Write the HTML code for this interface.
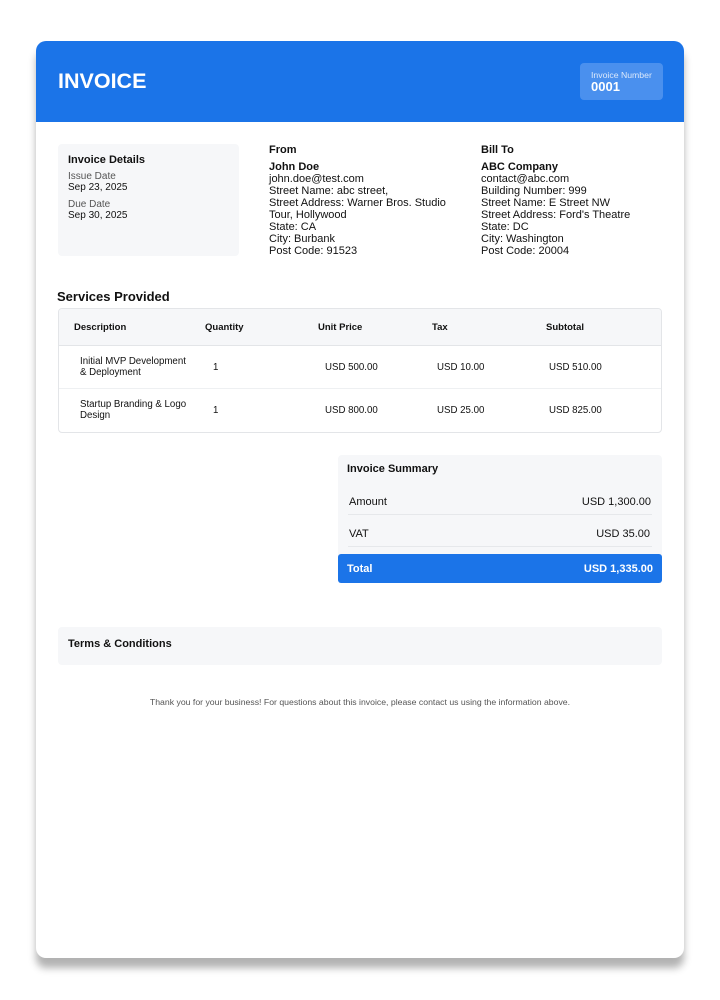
<!DOCTYPE html>
<html><head><meta charset="utf-8"><style>
*{margin:0;padding:0;box-sizing:border-box}
body{width:720px;height:1000px;background:#fff;font-family:"Liberation Sans",Arial,sans-serif;color:#111;position:relative;overflow:hidden}
.card{position:absolute;left:36px;top:41px;width:648px;height:917px;background:#fff;border-radius:10px;box-shadow:0 10px 8px rgba(0,0,0,0.3);overflow:hidden}
.hdr{position:absolute;left:0;top:0;width:648px;height:81px;background:#1b74e8}
.a{position:absolute;white-space:nowrap}
.t{font-size:11px;line-height:12px}
.b{font-weight:bold}
</style></head><body>
<div class="card">
<div class="hdr">
 <div class="a b" style="left:22px;top:28px;font-size:21.5px;color:#fff">INVOICE</div>
 <div class="a" style="left:544px;top:22px;width:83px;height:37px;background:#4a90ee;border-radius:4px"></div>
 <div class="a" style="left:555px;top:29px;font-size:8.7px;color:#dce9fb">Invoice Number</div>
 <div class="a b" style="left:555px;top:38px;font-size:13px;color:#fff">0001</div>
</div>
<div class="a" style="left:22px;top:103px;width:181px;height:112px;background:#f6f7f9;border-radius:4px"></div>
<div class="a b t" style="left:32px;top:113px">Invoice Details</div>
<div class="a" style="left:32px;top:130px;font-size:10px;color:#555">Issue Date</div>
<div class="a" style="left:32px;top:141px;font-size:10px">Sep 23, 2025</div>
<div class="a" style="left:32px;top:158px;font-size:10px;color:#555">Due Date</div>
<div class="a" style="left:32px;top:169px;font-size:10px">Sep 30, 2025</div>

<div class="a t" style="left:233px;top:103px"><b>From</b><div style="height:5px"></div><b>John Doe</b><br>john.doe@test.com<br>Street Name: abc street,<br>Street Address: Warner Bros. Studio<br>Tour, Hollywood<br>State: CA<br>City: Burbank<br>Post Code: 91523</div>
<div class="a t" style="left:445px;top:103px"><b>Bill To</b><div style="height:5px"></div><b>ABC Company</b><br>contact@abc.com<br>Building Number: 999<br>Street Name: E Street NW<br>Street Address: Ford's Theatre<br>State: DC<br>City: Washington<br>Post Code: 20004</div>

<div class="a b" style="left:21px;top:248px;font-size:13px">Services Provided</div>
<div class="a" style="left:22px;top:267px;width:604px;height:125px;border:1px solid #e3e5e8;border-radius:4px;overflow:hidden">
 <div style="height:37px;background:#f6f7f9;border-bottom:1px solid #e3e5e8"></div>
 <div style="height:43px;border-bottom:1px solid #eef0f2"></div>
</div>
<div class="a b" style="left:38px;top:281px;font-size:9.5px">Description</div>
<div class="a b" style="left:169px;top:281px;font-size:9.5px">Quantity</div>
<div class="a b" style="left:282px;top:281px;font-size:9.5px">Unit Price</div>
<div class="a b" style="left:396px;top:281px;font-size:9.5px">Tax</div>
<div class="a b" style="left:510px;top:281px;font-size:9.5px">Subtotal</div>
<div class="a" style="left:44px;top:315px;font-size:9.7px;line-height:11px">Initial MVP Development<br>&amp; Deployment</div>
<div class="a" style="left:44px;top:358px;font-size:9.7px;line-height:11px">Startup Branding &amp; Logo<br>Design</div>
<div class="a" style="left:177px;top:321px;font-size:9.7px">1</div>
<div class="a" style="left:177px;top:364px;font-size:9.7px">1</div>
<div class="a" style="left:289px;top:321px;font-size:9.7px">USD 500.00</div>
<div class="a" style="left:289px;top:364px;font-size:9.7px">USD 800.00</div>
<div class="a" style="left:401px;top:321px;font-size:9.7px">USD 10.00</div>
<div class="a" style="left:401px;top:364px;font-size:9.7px">USD 25.00</div>
<div class="a" style="left:513px;top:321px;font-size:9.7px">USD 510.00</div>
<div class="a" style="left:513px;top:364px;font-size:9.7px">USD 825.00</div>

<div class="a" style="left:302px;top:414px;width:324px;height:128px;background:#f6f7f9;border-radius:4px"></div>
<div class="a b t" style="left:311px;top:422px">Invoice Summary</div>
<div class="a t" style="left:313px;top:455px">Amount</div>
<div class="a t" style="right:33px;top:455px">USD 1,300.00</div>
<div class="a" style="left:312px;top:473px;width:304px;height:1px;background:#e6e8eb"></div>
<div class="a t" style="left:313px;top:487px">VAT</div>
<div class="a t" style="right:34px;top:487px">USD 35.00</div>
<div class="a" style="left:312px;top:505px;width:304px;height:1px;background:#e6e8eb"></div>
<div class="a" style="left:302px;top:513px;width:324px;height:29px;background:#1b74e8;border-radius:3px"></div>
<div class="a b t" style="left:311px;top:522px;color:#fff">Total</div>
<div class="a b t" style="right:31px;top:522px;color:#fff">USD 1,335.00</div>

<div class="a" style="left:22px;top:586px;width:604px;height:38px;background:#f6f7f9;border-radius:4px"></div>
<div class="a b t" style="left:32px;top:597px">Terms &amp; Conditions</div>
<div class="a" style="left:0;width:648px;text-align:center;top:656px;font-size:8.7px;color:#555">Thank you for your business! For questions about this invoice, please contact us using the information above.</div>
</div>
</body></html>
